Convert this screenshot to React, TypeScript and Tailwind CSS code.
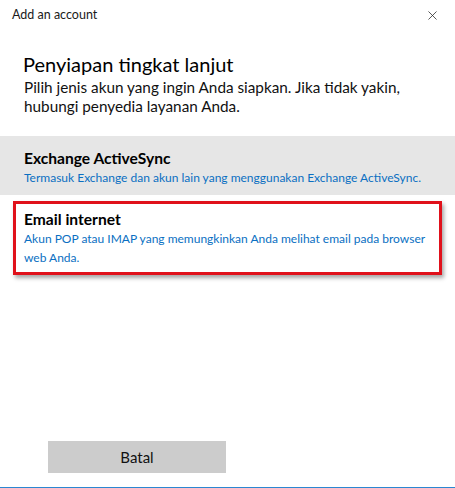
import { X } from 'lucide-react';

const font = { fontFamily: 'Lato, "Noto Sans", sans-serif' };

function AccountOption({ title, description, selected, highlighted }: { title: string; description: string; selected?: boolean; highlighted?: boolean }) {
  return (
    <div className={`${selected ? 'bg-[#e6e6e6]' : 'bg-white'} ${highlighted ? 'mx-[13px] border-[3px] border-[#e0111b] shadow-[2px_3px_4px_rgba(0,0,0,0.35)] pl-[8px] pr-2 pt-[5px] pb-[5px]' : 'px-[24px] pt-[12px] pb-[8px]'}`}>
      <p className="text-[15.6px] font-bold text-black leading-[20px]">{title}</p>
      <p className="text-[12px] text-[#0a6fc2] leading-[19px]">{description}</p>
    </div>
  );
}

export default function App() {
  return (
    <div className="w-[455px] h-[488px] bg-white flex flex-col border-b border-[#2b87d1]" style={font}>
      {/* Title bar */}
      <div className="h-[31px] flex items-center justify-between pl-[12px] pr-[15px]">
        <span className="text-[12.5px] text-[#1a1a1a]">Add an account</span>
        <X className="w-[15px] h-[15px] text-[#222]" strokeWidth={1.2} />
      </div>

      {/* Heading */}
      <div className="pl-[23px] pt-[20px] pr-4">
        <h1 className="text-[20px] text-black leading-[26px]">Penyiapan tingkat lanjut</h1>
        <p className="text-[15.3px] text-[#111] leading-[19px] pl-[1px] pt-[1px]">
          Pilih jenis akun yang ingin Anda siapkan. Jika tidak yakin, hubungi penyedia layanan Anda.
        </p>
      </div>

      {/* Account types */}
      <div className="mt-[20px] flex flex-col gap-[6px]">
        <AccountOption
          selected
          title="Exchange ActiveSync"
          description="Termasuk Exchange dan akun lain yang menggunakan Exchange ActiveSync."
        />
        <AccountOption
          highlighted
          title="Email internet"
          description="Akun POP atau IMAP yang memungkinkan Anda melihat email pada browser web Anda."
        />
      </div>

      <div className="flex-1" />

      {/* Footer */}
      <div className="pl-[48px] pb-[14px]">
        <button className="w-[178px] h-[32px] bg-[#cccccc] text-[15px] text-[#111]">Batal</button>
      </div>
    </div>
  );
}
